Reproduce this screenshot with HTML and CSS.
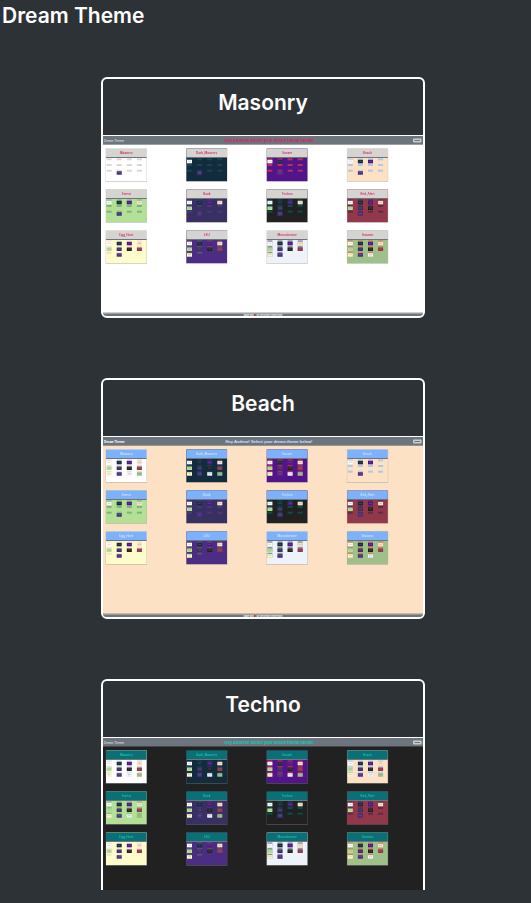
FILE: index.html
```html
<!DOCTYPE html>
<html lang="en">
<head>
  <meta charset="utf-8">
  <meta name="viewport" content="width=device-width, initial-scale=1">
  <title>Dream Theme</title>
  <link rel="stylesheet" href="styles.css">
</head>
<body>
  <header class="topbar"><h1 class="brand">Dream Theme</h1></header>
  <main class="themes">
    <article class="card">
      <h2 class="card-title">Masonry</h2>
      <svg class="preview masonry" viewBox="0 0 320 180" role="img" aria-label="Masonry theme preview"></svg>
    </article>
    <article class="card">
      <h2 class="card-title">Beach</h2>
      <svg class="preview beach" viewBox="0 0 320 180" role="img" aria-label="Beach theme preview"></svg>
    </article>
    <article class="card">
      <h2 class="card-title">Techno</h2>
      <svg class="preview techno" viewBox="0 0 320 180" role="img" aria-label="Techno theme preview"></svg>
    </article>
  </main>
  <script src="previews.js"></script>
</body>
</html>
```
FILE: styles.css
```css
* { box-sizing: border-box; }

body {
  margin: 0;
  height: 100vh;
  display: flex;
  flex-direction: column;
  padding-bottom: 13px;
  background: #2d3236;
  color: #fff;
  font-family: Inter, "Liberation Sans", sans-serif;
}

.topbar { flex: none; padding: 1px 2px 0; }

.brand, .card-title {
  margin: 0;
  font-size: 21px;
  font-weight: 600;
  line-height: 30px;
}

.themes {
  flex: 1;
  min-height: 0;
  overflow: hidden;
  display: flex;
  flex-direction: column;
  align-items: center;
  gap: 60px;
  padding: 46px 5px 0 0;
}

.card {
  flex: none;
  width: 100%;
  max-width: 324px;
  border: 2px solid #fff;
  border-radius: 6px;
  overflow: hidden;
}

.card-title {
  padding: 9px 8px 17px;
  text-align: center;
  border-bottom: 1px solid #fff;
}

.preview { display: block; width: 100%; height: auto; }

.preview text {
  font-family: Inter, "Liberation Sans", sans-serif;
  font-size: 3px;
  font-weight: 600;
  text-anchor: middle;
  fill: var(--accent);
}

.preview .thumbs { filter: blur(0.4px); }
.preview .message { font-size: 4px; font-weight: 700; }
.preview .start { text-anchor: start; fill: #e4e7e9; font-weight: 400; }
.preview .credit { font-size: 2px; fill: #fff; }
.preview .page { fill: var(--page); }
.preview .head { fill: var(--head); }
.preview .nav { fill: #6c757d; }
.preview .edge { fill: #596065; opacity: 0.6; }
.preview .button { fill: #c8cdd0; }
.preview .heart { fill: #dc3545; }

.masonry { --page: #fff; --head: #d6d4d0; --accent: #d62466; }
.beach { --page: #fde1c5; --head: #7db1fb; --accent: #cfe2ff; }
.beach .message { font-family: "Liberation Sans", sans-serif; }
.beach .start { font-weight: 700; fill: #fff; }
.techno { --page: #212121; --head: #0b7075; --accent: #10c8b4; }
```
FILE: previews.js
```javascript
// name, page colour, colour of the small card headers
const themes = [
  ["Masonry", "#ffffff", "#dcd7d6"],
  ["Dark_Masonry", "#122b3d", "#1d4055"],
  ["Sunset", "#51148b", "#b83058"],
  ["Beach", "#fde1c5", "#b0c8e2"],
  ["Forest", "#b3e096", "#7db776"],
  ["Dusk", "#382f63", "#483a6e"],
  ["Techno", "#212121", "#0b4c4b"],
  ["Red_Alert", "#91384b", "#5e2c49"],
  ["Egg_Hunt", "#fffccb", "#f9dcd0"],
  ["LSU", "#4b2e83", "#665069"],
  ["Monochrome", "#eef3f9", "#707c86"],
  ["Autumn", "#9fc088", "#c87d55"]
];

// which tiles each nested page shows; "-" is an empty tile, "." is no tile
const partial = [
  "---------9--", "0--------9--", "01-------9--", "012------9--",
  "0123-----9--", "01234----9--", "012345---9--", "0123456--9--",
  "01234567-9..", "012345678-..", "0123456789..", "0123456789a."
];
const full = "0123456789ab";
const completed = { masonry: [], beach: [0, 1, 2], techno: [0, 1, 2, 3, 4, 5] };

const rect = (x, y, w, h, attrs) =>
  `<rect x="${x}" y="${y}" width="${w}" height="${h}" ${attrs}/>`;

function tile(index, x, y, owner) {
  if (index === ".") return "";
  const strip = themes[owner][2];
  if (index === "-") return rect(x, y, 5, 2, `fill="${strip}"`);
  const color = themes[parseInt(index, 16)][1];
  return rect(x, y, 5, 5, `fill="${strip}" opacity="0.8"`) +
    rect(x, y + 1.5, 5, 3.5, `fill="${color}"`) +
    rect(x + 1, y + 2.5, 3, 1, 'fill="#8d8494" opacity="0.35"');
}

function thumb(i, pattern) {
  const x = 3 + (i % 4) * 80.4;
  const y = 12.5 + Math.floor(i / 4) * 41;
  let out = rect(x - 0.3, y, 41.3, 33.3, 'fill="#8b8b8b" opacity="0.5"') +
    rect(x, y, 40.6, 32.6, `fill="${themes[i][1]}"`) +
    rect(x, y, 40.6, 8.5, 'class="head"') +
    rect(x, y + 8.5, 40.6, 1, 'fill="#6c757d"');
  [...pattern].forEach((c, n) => {
    out += tile(c, x + 0.6 + (n % 4) * 10.1, y + 9.8 + Math.floor(n / 4) * 5.7, i);
  });
  return out + `<text x="${x + 20.3}" y="${y + 5}">${themes[i][0]}</text>`;
}

for (const name of Object.keys(completed)) {
  const svg = document.querySelector(`.preview.${name}`);
  let out = rect(0, 0, 320, 180, 'class="page"') +
    rect(0, 0, 320, 8, 'class="nav"') + rect(0, 8, 320, 1, 'class="edge"') +
    '<text class="start" x="1" y="5.5">Dream Theme</text>' +
    '<text class="message" x="166" y="5.5">Hey Andrew! Select your dream theme below!</text>' +
    rect(310, 2.5, 8.5, 4, 'class="button" rx="1"') +
    rect(311.5, 4, 5.5, 1, 'class="nav"') + '<g class="thumbs">';
  themes.forEach((_, i) => {
    out += thumb(i, completed[name].includes(i) ? full : partial[i]);
  });
  out += '</g>';
  if (name !== "techno") {
    out += rect(0, 176.5, 320, 1, 'class="edge"') + rect(0, 177.5, 320, 2.5, 'class="nav"') +
      '<text class="credit" x="160" y="179.5">Made with <tspan class="heart">♥</tspan> by the Dream Theme team</text>';
  }
  svg.innerHTML = out;
}
```
